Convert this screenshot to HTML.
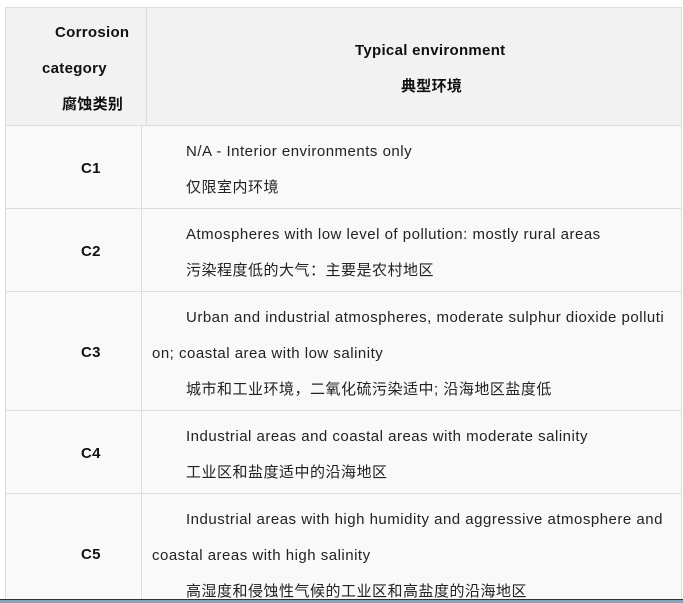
<!DOCTYPE html>
<html><head><meta charset="utf-8"><style>
*{margin:0;padding:0;box-sizing:border-box}
html,body{width:683px;height:603px;overflow:hidden}
body{background:#fff;position:relative;font-family:"Liberation Sans","Noto Sans CJK SC",sans-serif;font-size:15px;letter-spacing:0.5px;color:#222}
.c{position:absolute;border:1px solid #ddd}
.t{position:absolute;white-space:nowrap;line-height:36px;margin-top:2px}
.b{font-weight:bold;color:#111;letter-spacing:0.3px}
</style></head><body>
<div class="c" style="left:5px;top:7px;width:142px;height:119px;background:#f2f2f2"></div>
<div class="c" style="left:146px;top:7px;width:536px;height:119px;background:#f2f2f2"></div>
<div class="c" style="left:5px;top:125px;width:137px;height:84px;background:#f9f9f9"></div>
<div class="c" style="left:141px;top:125px;width:541px;height:84px;background:#f9f9f9"></div>
<div class="c" style="left:5px;top:208px;width:137px;height:84px;background:#f9f9f9"></div>
<div class="c" style="left:141px;top:208px;width:541px;height:84px;background:#f9f9f9"></div>
<div class="c" style="left:5px;top:291px;width:137px;height:120px;background:#f9f9f9"></div>
<div class="c" style="left:141px;top:291px;width:541px;height:120px;background:#f9f9f9"></div>
<div class="c" style="left:5px;top:410px;width:137px;height:84px;background:#f9f9f9"></div>
<div class="c" style="left:141px;top:410px;width:541px;height:84px;background:#f9f9f9"></div>
<div class="c" style="left:5px;top:493px;width:137px;height:110px;background:#f9f9f9;border-bottom:none"></div>
<div class="c" style="left:141px;top:493px;width:541px;height:110px;background:#f9f9f9;border-bottom:none"></div>
<div class="t b" style="left:55px;top:13px">Corrosion</div>
<div class="t b" style="left:42px;top:49px">category</div>
<div class="t b" style="left:62px;top:85px">腐蚀类别</div>
<div class="t b" style="left:355px;top:31px">Typical environment</div>
<div class="t b" style="left:401px;top:67px">典型环境</div>
<div class="t b" style="left:81px;top:149px">C1</div>
<div class="t b" style="left:81px;top:232px">C2</div>
<div class="t b" style="left:81px;top:333px">C3</div>
<div class="t b" style="left:81px;top:434px">C4</div>
<div class="t b" style="left:81px;top:535px">C5</div>
<div class="t" style="left:186px;top:132px">N/A - Interior environments only</div>
<div class="t" style="left:186px;top:168px">仅限室内环境</div>
<div class="t" style="left:186px;top:215px">Atmospheres with low level of pollution: mostly rural areas</div>
<div class="t" style="left:186px;top:251px">污染程度低的大气：主要是农村地区</div>
<div class="t" style="left:186px;top:298px">Urban and industrial atmospheres, moderate sulphur dioxide polluti</div>
<div class="t" style="left:152px;top:334px">on; coastal area with low salinity</div>
<div class="t" style="left:186px;top:370px">城市和工业环境，二氧化硫污染适中; 沿海地区盐度低</div>
<div class="t" style="left:186px;top:417px">Industrial areas and coastal areas with moderate salinity</div>
<div class="t" style="left:186px;top:453px">工业区和盐度适中的沿海地区</div>
<div class="t" style="left:186px;top:500px">Industrial areas with high humidity and aggressive atmosphere and</div>
<div class="t" style="left:152px;top:536px">coastal areas with high salinity</div>
<div class="t" style="left:186px;top:572px">高湿度和侵蚀性气候的工业区和高盐度的沿海地区</div>
<div style="position:absolute;left:0;top:599px;width:683px;height:4px;background:linear-gradient(#333 0,#333 1px,#8aa0b8 1px)"></div>
</body></html>
